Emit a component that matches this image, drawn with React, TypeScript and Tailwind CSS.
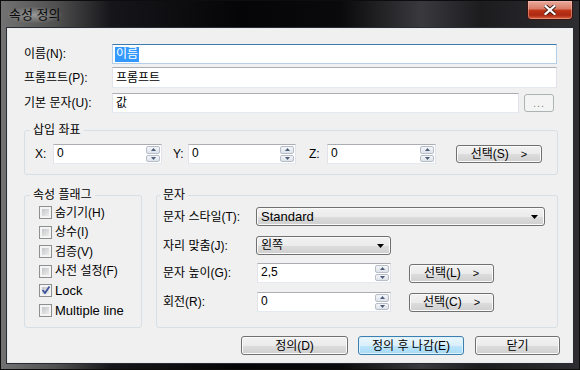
import React from 'react';

const FONT = "font-['Liberation_Sans','Noto_Sans_CJK_KR',sans-serif]";

const btnClass =
  'flex items-center justify-center rounded-[3px] border border-[#707070] bg-[linear-gradient(to_bottom,#f2f2f2_0%,#ebebeb_50%,#dddddd_51%,#cfcfcf_100%)] shadow-[inset_0_0_0_1px_#fbfbfb] text-[12px] text-black';

const editClass =
  'flex bg-white border border-[#e2e3ea] border-t-[#abadb3] border-b-[#e3e9ef]';

const Arrow = ({ up }: { up?: boolean }) => (
  <div className="flex flex-1 items-center justify-center rounded-[2px] border border-[#b8bec8] bg-[linear-gradient(to_bottom,#f4f6f9,#dde3ea)]">
    <svg width="5" height="3" viewBox="0 0 5 3">
      <path d={up ? 'M0 3 L2.5 0 L5 3 Z' : 'M0 0 L5 0 L2.5 3 Z'} fill="#4d5c78" />
    </svg>
  </div>
);

const Spin = ({ value, className = '' }: { value: string; className?: string }) => (
  <div className={`${editClass} h-[20px] ${className}`}>
    <span className="flex-1 pl-[3px] text-[12px] leading-[17px]">{value}</span>
    <div className="flex w-[16px] flex-col gap-px p-px">
      <Arrow up />
      <Arrow />
    </div>
  </div>
);

const Combo = ({ value, className = '' }: { value: string; className?: string }) => (
  <div className={`${btnClass} h-[19px] !justify-between pl-[4px] pr-[6px] ${className}`}>
    <span className="text-[12px] leading-[17px]">{value}</span>
    <svg width="7" height="4" viewBox="0 0 7 4">
      <path d="M0 0 L7 0 L3.5 4 Z" fill="#000" />
    </svg>
  </div>
);

const Check = ({ checked }: { checked?: boolean }) => (
  <span className="flex h-[13px] w-[13px] shrink-0 border border-[#8e8f8f] bg-[#f4f4f4] p-[2px]">
    <span className="relative flex-1 bg-[linear-gradient(135deg,#c4c6c9,#ececec)]">
      {checked && (
        <svg className="absolute -left-[1px] -top-[2px]" width="10" height="10" viewBox="0 0 10 10">
          <path d="M1.5 5 L4 8 L8.5 1.5" fill="none" stroke="#3d539e" strokeWidth="1.8" />
        </svg>
      )}
    </span>
  </span>
);

const Group = ({
  title,
  className = '',
  legendClass = 'ml-[5px]',
  children,
}: {
  title: string;
  className?: string;
  legendClass?: string;
  children: React.ReactNode;
}) => (
  <fieldset className={`min-w-0 rounded-[3px] border border-[#d5dfe5] ${className}`}>
    <legend className={`px-[3px] text-[12px] leading-[14px] ${legendClass}`}>{title}</legend>
    {children}
  </fieldset>
);

const SelectBtn = ({ label, className = '' }: { label: string; className?: string }) => (
  <div className={`${btnClass} gap-[12px] ${className}`}>
    <span>{label}</span>
    <span className="text-[11px]">&gt;</span>
  </div>
);

export default function App() {
  const flags = ['숨기기(H)', '상수(I)', '검증(V)', '사전 설정(F)'];

  return (
    <div
      className={`flex h-[370px] w-[580px] flex-col overflow-hidden border border-[#0d0d0d] bg-[linear-gradient(to_right,#727272_0px,#505050_55px,#16161a_110px,#050507_240px,#0a0a0c_340px,#3a3a3e_420px,#1c1c1f_480px,#2e2e32_580px)] text-black ${FONT}`}
    >
      {/* Title bar */}
      <div className="flex h-[27px] shrink-0 items-start justify-between pl-[6px] pr-[6px]">
        <span className="mt-[6px] rounded-[8px] bg-[radial-gradient(ellipse_at_center,rgba(200,200,200,0.55),rgba(200,200,200,0)_75%)] px-[2px] text-[13px] leading-[16px] text-[#0a0a0a]">
          속성 정의
        </span>
        <div className="-mt-px flex h-[20px] w-[46px] items-center justify-center rounded-b-[4px] border border-[#3a1410] bg-[linear-gradient(to_bottom,#e9aa9c_0%,#d77a65_45%,#c13719_50%,#ab2810_78%,#d9613d_100%)] shadow-[inset_0_0_0_1px_rgba(255,200,190,0.45)]">
          <svg width="12" height="10" viewBox="0 0 12 10">
            <path d="M1.5 1 L10.5 9 M10.5 1 L1.5 9" stroke="#3b1a14" strokeWidth="4" strokeLinecap="square" />
            <path d="M1.5 1 L10.5 9 M10.5 1 L1.5 9" stroke="#ffffff" strokeWidth="2.2" strokeLinecap="square" />
          </svg>
        </div>
      </div>

      {/* Client area */}
      <div className="mx-[6px] mb-[6px] flex flex-1 flex-col border border-[#e6ebf0] bg-[#f0f0f0] pl-[16px] pr-[14px] pt-[15px] text-[12px] shadow-[0_0_0_1px_#2c2c30]">
        <div className="flex h-[20px] items-center">
          <span className="w-[88px]">이름(N):</span>
          <div className="mr-px flex h-[20px] flex-1 items-center border border-[#b5cfe7] border-t-[#3d7bad] bg-white pl-[2px]">
            <span className="bg-[#3399ff] px-px leading-[15px] text-white">이름</span>
          </div>
        </div>
        <div className="mt-[3px] flex h-[21px] items-center">
          <span className="w-[88px]">프롬프트(P):</span>
          <div className={`${editClass} mr-px h-[21px] flex-1 items-center pl-[3px]`}>프롬프트</div>
        </div>
        <div className="mt-[5px] flex h-[20px] items-center">
          <span className="w-[88px]">기본 문자(U):</span>
          <div className={`${editClass} h-[20px] flex-1 items-center pl-[3px]`}>값</div>
          <div className="ml-[5px] mr-[4px] flex h-[18px] w-[30px] items-center justify-center rounded-[3px] border border-[#adb2b5] bg-[#f4f4f4] text-[11px] tracking-[1px] text-[#8a8a8a]">
            ...
          </div>
        </div>

        <Group title="삽입 좌표" className="mt-[10px] pb-[10px]">
          <div className="mt-[7px] flex h-[20px] items-center pl-[10px]">
            <span className="w-[18px]">X:</span>
            <Spin value="0" className="w-[109px]" />
            <span className="ml-[11px] w-[15px]">Y:</span>
            <Spin value="0" className="w-[108px]" />
            <span className="ml-[13px] w-[18px]">Z:</span>
            <Spin value="0" className="w-[109px]" />
            <SelectBtn label="선택(S)" className="ml-[20px] h-[18px] w-[86px]" />
          </div>
        </Group>

        <div className="mt-[13px] flex gap-[14px]">
          <Group title="속성 플래그" className="h-[140px] w-[118px]">
            <div className="mt-px pl-[14px]">
              {flags.map((f) => (
                <div key={f} className="flex h-[19.5px] items-center gap-[3px]">
                  <Check />
                  <span>{f}</span>
                </div>
              ))}
              <div className="flex h-[19.5px] items-center gap-[3px]">
                <Check checked />
                <span className="text-[13px]">Lock</span>
              </div>
              <div className="flex h-[19.5px] items-center gap-[3px]">
                <Check />
                <span className="text-[13px]">Multiple line</span>
              </div>
            </div>
          </Group>

          <Group title="문자" className="h-[140px] flex-1" legendClass="ml-[3px]">
            <div className="mt-[5px] pl-[6px] pr-[12px]">
              <div className="flex h-[19px] items-center">
                <span className="w-[93px]">문자 스타일(T):</span>
                <Combo value="Standard" className="flex-1 [&>span]:text-[13px]" />
              </div>
              <div className="mt-[10px] flex h-[19px] items-center">
                <span className="w-[93px]">자리 맞춤(J):</span>
                <Combo value="왼쪽" className="w-[135px]" />
              </div>
              <div className="mt-[8px] flex h-[20px] items-center">
                <span className="w-[94px]">문자 높이(G):</span>
                <Spin value="2,5" className="w-[134px]" />
                <SelectBtn label="선택(L)" className="ml-[18px] h-[19px] w-[85px]" />
              </div>
              <div className="mt-[9px] flex h-[20px] items-center">
                <span className="w-[94px]">회전(R):</span>
                <Spin value="0" className="w-[134px]" />
                <SelectBtn label="선택(C)" className="ml-[18px] h-[19px] w-[85px]" />
              </div>
            </div>
          </Group>
        </div>

        <div className="-mr-[2px] mt-[8px] flex justify-end">
          <div className={`${btnClass} h-[19px] w-[107px]`}>정의(D)</div>
          <div className="ml-[10px] flex h-[19px] w-[106px] items-center justify-center rounded-[3px] border border-[#3c7fb1] bg-[linear-gradient(to_bottom,#eaf6fd_0%,#d9f0fc_50%,#bee6fd_51%,#a7d9f5_100%)] shadow-[inset_0_0_0_1px_#dff2fc] text-[12px]">
            정의 후 나감(E)
          </div>
          <div className={`${btnClass} ml-[11px] h-[19px] w-[85px]`}>닫기</div>
        </div>
      </div>
    </div>
  );
}
